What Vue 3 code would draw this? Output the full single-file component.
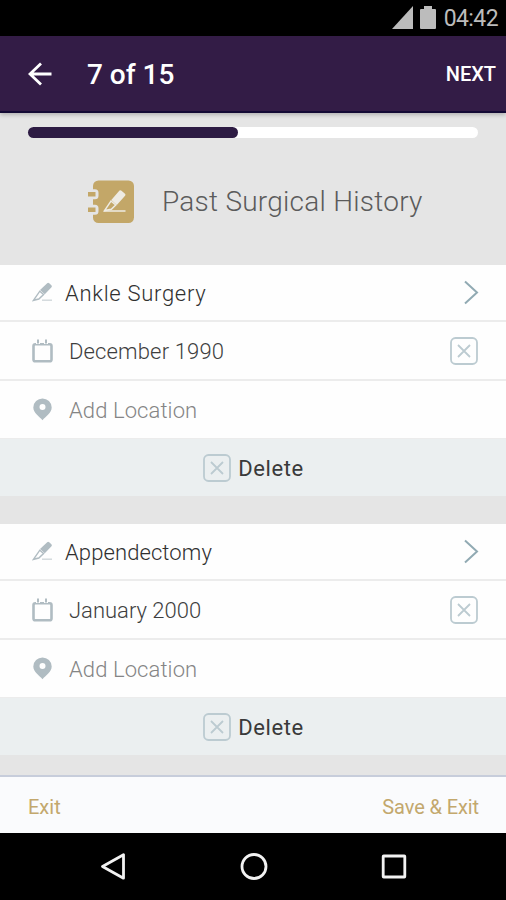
<template>
  <div class="screen">
    <div class="status-bar">
      <svg class="signal" width="21" height="23" viewBox="0 0 21 23">
        <path d="M0 23L21 0V23Z" />
      </svg>
      <svg class="battery" width="16" height="23" viewBox="0 0 16 23">
        <path d="M4 0H12V3H15Q16 3 16 4V22Q16 23 15 23H1Q0 23 0 22V4Q0 3 1 3H4Z" />
      </svg>
      <span class="clock">04:42</span>
    </div>

    <header class="header">
      <svg class="back" width="24" height="24" viewBox="0 0 24 24">
        <path d="M13 1.5L2 12L13 22.5M2 12H23.5" />
      </svg>
      <h1 class="step">{{ step }} of {{ total }}</h1>
      <button class="next">NEXT</button>
    </header>

    <main class="content">
      <div class="progress">
        <div class="progress-fill" :style="{ width: (step / total) * 100 + '%' }"></div>
      </div>

      <div class="title">
        <svg class="book" width="48" height="44" viewBox="0 0 48 44">
          <rect class="cover" x="6" y="0.5" width="41" height="42.5" rx="5.5" />
          <path class="ring-gap" d="M2 10.2H8Q10.5 10.2 10.5 12.7V15.7Q10.5 18.2 8 18.2H2M2 25.7H8Q10.5 25.7 10.5 28.2V31.2Q10.5 33.7 8 33.7H2" />
          <path class="ring" d="M1 14.2H8.5M1 29.7H8.5" />
          <path class="blade" d="M32.5 10.6Q33.5 9.8 34.5 10.7L38 13.7Q39 14.7 38.1 15.8L29.8 25L24.3 20Z" />
          <path class="blade-edge" d="M24 21L28.7 25L24.3 29.3L17.5 30.6Z" />
          <path class="cut" d="M17 31H38.5" />
        </svg>
        <h2>Past Surgical History</h2>
      </div>

      <section v-for="item in surgeries" :key="item.name" class="card">
        <div class="row name-row">
          <svg class="icon" width="21" height="21" viewBox="0 0 21 21">
            <path class="solid" d="M15.2 1.2Q16.2 0.4 17.2 1.3L19.4 3.2Q20.4 4.2 19.5 5.3L12.8 12.3L8 8.1Z" />
            <path class="edge" d="M7.8 9.2L11.6 12.5L6.8 17L1.5 18.3Z" />
            <path class="baseline" d="M10 18.2H20" />
          </svg>
          <span class="text" :style="{ letterSpacing: item.nameSpacing + 'px' }">{{ item.name }}</span>
          <svg class="chevron" width="15" height="25" viewBox="0 0 15 25">
            <path d="M1 1.5L13 12.5L1 23.5" />
          </svg>
        </div>
        <div class="row">
          <svg class="icon" width="21" height="24" viewBox="0 0 21 24">
            <rect class="frame" x="1.5" y="5.3" width="18" height="16.9" rx="1.8" />
            <path class="rings-gap" d="M6 1V5M14 1V5" />
            <path class="rings" d="M6 0.5V4.6M14 0.5V4.6" />
          </svg>
          <span class="text" :style="{ letterSpacing: item.dateSpacing + 'px' }">{{ item.date }}</span>
          <svg class="clear" width="28" height="28" viewBox="0 0 28 28">
            <rect x="1" y="1" width="26" height="26" rx="4.5" />
            <path d="M8 8L20 20M20 8L8 20" />
          </svg>
        </div>
        <div class="row location-row">
          <svg class="icon" width="21" height="23" viewBox="0 0 21 23">
            <path class="solid" fill-rule="evenodd" d="M10.5 0.5A9.2 9.2 0 0 0 1.3 9.5C1.3 14.8 7.5 18.5 10.5 22.3C13.5 18.5 19.7 14.8 19.7 9.5A9.2 9.2 0 0 0 10.5 0.5ZM10.5 6A3 3 0 1 1 10.5 12A3 3 0 1 1 10.5 6Z" />
          </svg>
          <span class="text muted">Add Location</span>
        </div>
        <div class="delete-row">
          <svg class="clear" width="28" height="28" viewBox="0 0 28 28">
            <rect x="1" y="1" width="26" height="26" rx="4.5" />
            <path d="M8 8L20 20M20 8L8 20" />
          </svg>
          <span>Delete</span>
        </div>
      </section>
    </main>

    <footer class="footer">
      <span class="exit">Exit</span>
      <span class="save">Save &amp; Exit</span>
    </footer>

    <nav class="nav-bar">
      <svg width="28" height="28" viewBox="0 0 28 28">
        <path d="M24.5 1.8V25.2L3.5 13.5Z" />
      </svg>
      <svg width="28" height="28" viewBox="0 0 28 28">
        <circle cx="14" cy="13.5" r="12" />
      </svg>
      <svg width="28" height="28" viewBox="0 0 28 28">
        <rect x="3.2" y="3" width="21.6" height="21" rx="0.5" />
      </svg>
    </nav>
  </div>
</template>

<script setup>
import { ref } from "vue";
const step = ref(7);
const total = 15;
const surgeries = ref([
  { name: "Ankle Surgery", date: "December 1990", nameSpacing: 0.7, dateSpacing: 0.15 },
  { name: "Appendectomy", date: "January 2000", nameSpacing: 0.1, dateSpacing: 0 },
]);
</script>

<style>
body {
  margin: 0;
  background-color: #000;
}
</style>

<style scoped>
.screen {
  display: flex;
  flex-direction: column;
  width: 506px;
  height: 900px;
  overflow: hidden;
  font-family: Roboto, "Liberation Sans", sans-serif;
  background-color: #e5e5e5;
}

svg {
  display: block;
  flex: none;
}

.status-bar {
  display: flex;
  flex: none;
  align-items: center;
  justify-content: flex-end;
  height: 36px;
  padding-right: 8px;
  box-sizing: border-box;
  background-color: #000;
  color: #bcbcbc;
}

.status-bar svg {
  margin-bottom: 1px;
  fill: #bcbcbc;
}

.status-bar .battery {
  margin-left: 7px;
}

.clock {
  margin-left: 8px;
  padding-top: 2px;
  font-size: 23px;
  line-height: 34px;
  letter-spacing: -0.6px;
}

.header {
  display: flex;
  flex: none;
  align-items: center;
  height: 77px;
  padding: 1px 10px 0 28px;
  box-sizing: border-box;
  border-bottom: 2px solid #140a35;
  background-color: #331c46;
  box-shadow: 0 2px 4px rgba(0, 0, 0, 0.22);
  color: #fff;
  z-index: 1;
}

.back path {
  fill: none;
  stroke: #fff;
  stroke-width: 2.8;
}

.step {
  margin: 0 auto 0 35px;
  padding-top: 1px;
  font-size: 28px;
  font-weight: 500;
  line-height: 34px;
}

.next {
  padding: 0;
  border: 0;
  background: none;
  color: #fff;
  font-family: inherit;
  font-size: 20px;
  font-weight: 500;
}

.content {
  flex: 1;
  min-height: 0;
}

.progress {
  height: 11px;
  margin: 14px 28px 0;
  border-radius: 6px;
  background-color: #fff;
}

.progress-fill {
  height: 11px;
  border-radius: 6px;
  background-color: #2d1b43;
}

.title {
  display: flex;
  align-items: center;
  height: 127px;
  padding-left: 87px;
}

.title h2 {
  margin: 0 0 0 27px;
  color: #5b5b5b;
  font-size: 28px;
  font-weight: 300;
  line-height: 34px;
  letter-spacing: 0.25px;
  white-space: nowrap;
}

.cover {
  fill: #c3a768;
}

.ring-gap {
  fill: #e5e5e5;
  stroke: #e5e5e5;
  stroke-width: 2;
}

.ring {
  stroke: #c3a768;
  stroke-width: 4.4;
}

.blade {
  fill: #eeebe3;
}

.blade-edge {
  fill: none;
  stroke: #eeebe3;
  stroke-width: 1.5;
}

.cut {
  stroke: #eeebe3;
  stroke-width: 1.5;
}

.card {
  margin-bottom: 28px;
  background-color: #fefefe;
}

.row {
  display: flex;
  align-items: center;
  height: 59px;
  padding: 0 28px 0 32px;
  box-sizing: border-box;
  border-bottom: 2px solid #ececec;
}

.name-row {
  height: 57px;
}

.location-row {
  height: 58px;
  border-bottom-width: 1px;
}

.text {
  flex: 1;
  margin-left: 16px;
  padding-top: 2px;
  color: #3e3e3e;
  font-size: 22px;
  font-weight: 300;
  line-height: 28px;
  white-space: nowrap;
}

.name-row .text {
  margin-left: 12px;
  color: #303030;
}

.text.muted {
  color: #858585;
  letter-spacing: 0.1px;
}

.solid {
  fill: #b0bcc2;
}

.edge {
  fill: none;
  stroke: #b0bcc2;
  stroke-width: 1.4;
}

.baseline {
  stroke: #d3dadd;
  stroke-width: 1.5;
}

.frame {
  fill: none;
  stroke: #b0bcc2;
  stroke-width: 2.6;
}

.rings-gap {
  stroke: #fefefe;
  stroke-width: 4;
}

.rings {
  stroke: #b0bcc2;
  stroke-width: 2;
}

.chevron {
  margin-right: -1px;
  fill: none;
  stroke: #91aab3;
  stroke-width: 2;
}

.clear {
  fill: none;
  stroke: #bccbd1;
  stroke-width: 1.8;
}

.delete-row {
  display: flex;
  align-items: center;
  justify-content: center;
  gap: 7px;
  height: 57px;
  padding: 1px 0 0 1px;
  box-sizing: border-box;
  background-color: #ebeff0;
  color: #3a3a3a;
  font-size: 22px;
  line-height: 28px;
  letter-spacing: 0.6px;
}

.delete-row span {
  padding-top: 1px;
}

.footer {
  display: flex;
  flex: none;
  align-items: center;
  justify-content: space-between;
  height: 58px;
  padding: 3px 27px 0 28px;
  box-sizing: border-box;
  border-top: 2px solid #c7cddb;
  background-color: #fafbfd;
  color: #c3a86d;
  font-size: 20px;
  z-index: 1;
}

.save {
  letter-spacing: -0.1px;
}

.nav-bar {
  display: flex;
  flex: none;
  align-items: center;
  justify-content: space-between;
  height: 67px;
  padding: 1px 98px 0 99px;
  box-sizing: border-box;
  background-color: #000;
}

.nav-bar svg {
  fill: none;
  stroke: #f2f2f2;
  stroke-width: 2.8;
  stroke-linejoin: round;
}
</style>
